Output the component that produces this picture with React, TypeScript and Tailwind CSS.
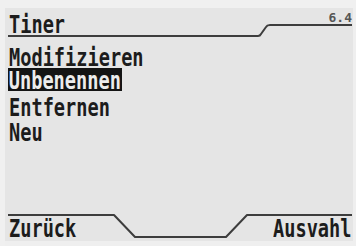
const mono = "font-['DejaVu_Sans_Mono',monospace] font-bold";

const items = ["Modifizieren", "Unbenennen", "Entfernen", "Neu"];

const Label = ({ text, active }: { text: string; active?: boolean }) => (
  <div className="h-[25px] leading-[25px] text-[25px] whitespace-nowrap">
    <span
      className={`inline-block origin-left scale-x-[0.745] ${mono} ${
        active
          ? "relative -top-[2px] h-[23px] bg-[#141414] text-[#ececec] px-[1px] -ml-[1px]"
          : "text-[#1c1c1c]"
      }`}
    >
      {text}
    </span>
  </div>
);

export default function App() {
  return (
    <div className="relative w-[356px] h-[246px] overflow-hidden bg-[#e5e5e5] shadow-[inset_5px_8px_0_#f0f0f0,inset_-3px_-5px_0_#efefef] flex flex-col pl-[9px] pr-[4px] pb-[6px]">
      <div className="h-[44px] flex justify-between items-start">
        <div className="mt-[11px]">
          <Label text="Tiner" />
        </div>
        <span className={`mt-[11px] text-[13px] leading-[13px] text-[#555] ${mono}`}>6.4</span>
      </div>
      <div className="flex flex-col">
        {items.map((it) => (
          <Label key={it} text={it} active={it === "Unbenennen"} />
        ))}
      </div>
      <div className="flex-1" />
      <div className="flex justify-between">
        <Label text="Zurück" />
        <div className="w-[79px]">
          <Label text="Ausvahl" />
        </div>
      </div>
      <svg
        className="absolute inset-0 pointer-events-none"
        width="356"
        height="246"
        viewBox="0 0 356 246"
        fill="none"
        stroke="#3d3d3d"
        strokeWidth="2"
        strokeLinejoin="round"
      >
        <path d="M8 36 H258 Q260 36 261 34 L266 27 Q267 25 270 25 H352" />
        <path d="M8 215 H114 L135 237 H226 L247 215 H352" />
      </svg>
    </div>
  );
}
